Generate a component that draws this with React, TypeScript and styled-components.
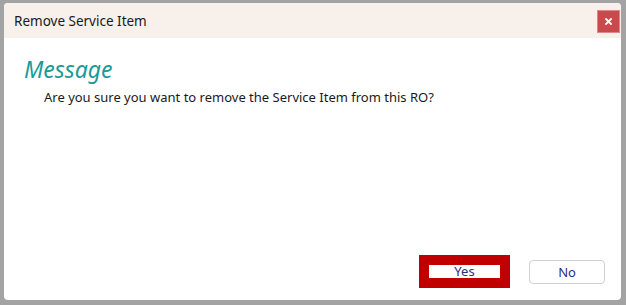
import React from 'react'
import styled, { createGlobalStyle } from 'styled-components'

const GlobalStyle = createGlobalStyle`
  html, body {
    margin: 0;
    padding: 0;
    background: #a3a3a3;
  }
  body {
    font-family: 'Noto Sans', 'Liberation Sans', sans-serif;
  }
`

type DialogProps = {
  title: string
  heading: string
  message: string
  onYes?: () => void
  onNo?: () => void
}

function CloseIcon() {
  return (
    <svg width="7" height="7" viewBox="0 0 7 7">
      <path d="M1 1 L6 6 M6 1 L1 6" stroke="#fff" strokeWidth="1.8" strokeLinecap="square" />
    </svg>
  )
}

function ConfirmDialog(props: DialogProps) {
  const { title, heading, message, onYes, onNo } = props
  return (
    <Dialog>
      <TitleBar>
        <Title>{title}</Title>
        <CloseButton aria-label="close">
          <CloseIcon />
        </CloseButton>
      </TitleBar>
      <Body>
        <Heading>{heading}</Heading>
        <Text>{message}</Text>
      </Body>
      <Footer>
        <Button highlighted onClick={onYes}>Yes</Button>
        <Button onClick={onNo}>No</Button>
      </Footer>
    </Dialog>
  )
}

export default function App() {
  return (
    <>
      <GlobalStyle />
      <Page>
        <ConfirmDialog
          title="Remove Service Item"
          heading="Message"
          message="Are you sure you want to remove the Service Item from this RO?"
        />
      </Page>
    </>
  )
}

const Page = styled.div`
  width: 626px;
  height: 305px;
  box-sizing: border-box;
  padding: 3px 5px 5px 4px;
`

const Dialog = styled.div`
  height: 297px;
  background: #fff;
  border-radius: 4px;
  display: flex;
  flex-direction: column;
  overflow: hidden;
`

const TitleBar = styled.div`
  height: 35px;
  background: #f8f0ea;
  display: flex;
  align-items: center;
  justify-content: space-between;
  padding: 0 1px 0 10px;
`

const Title = styled.div`
  font-size: 13.5px;
  color: #1a1a1a;
`

const CloseButton = styled.button`
  width: 23px;
  height: 23px;
  border: 1px solid #d88;
  background: #c94a4c;
  padding: 0;
  display: flex;
  align-items: center;
  justify-content: center;
  margin-top: 2px;
`

const Body = styled.div`
  flex: 1;
  padding: 17px 20px 0 20px;
`

const Heading = styled.div`
  font-size: 23px;
  font-style: italic;
  color: #1b9a9a;
  line-height: 28px;
`

const Text = styled.div`
  font-size: 13px;
  color: #1a1a1a;
  padding-left: 20px;
  margin-top: 5px;
`

const Footer = styled.div`
  display: flex;
  justify-content: flex-end;
  align-items: center;
  gap: 19px;
  padding: 0 16px 12px 0;
`

const Button = styled.button<{ highlighted?: boolean }>`
  font-family: 'Noto Sans', 'Liberation Sans', sans-serif;
  font-size: 13px;
  color: #2d2d80;
  background: #fff;
  cursor: pointer;
  padding: 0;
  ${p => p.highlighted
    ? `
    width: 91px;
    height: 33px;
    border: 10px solid #c00000;
    border-radius: 0;
    line-height: 11px;
  `
    : `
    width: 76px;
    height: 24px;
    border: 1px solid #d0d0d0;
    border-radius: 4px;
  `}
`
